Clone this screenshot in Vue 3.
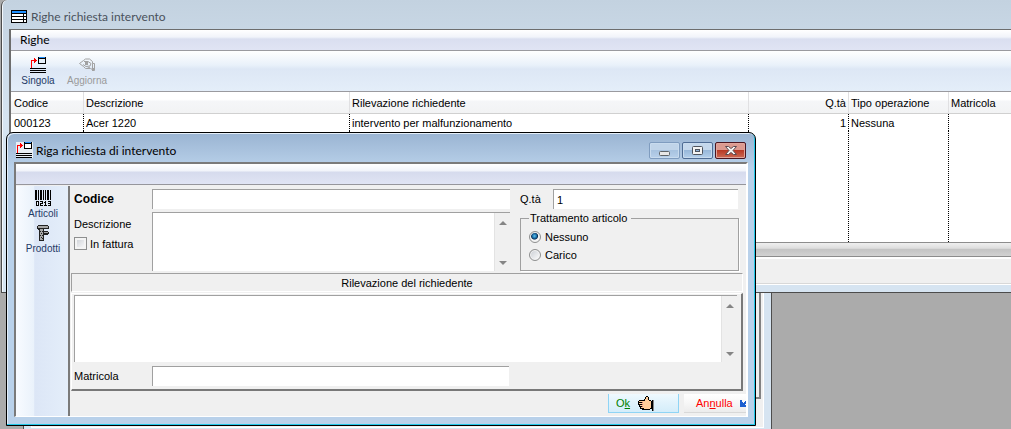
<script setup>
import { ref } from 'vue'

const rows = ref([
  {
    codice: '000123',
    descrizione: 'Acer 1220',
    rilevazione: 'intervento per malfunzionamento',
    quantita: 1,
    tipo: 'Nessuna',
    matricola: '',
  },
])

const form = ref({
  codice: '',
  descrizione: '',
  inFattura: false,
  quantita: '1',
  trattamento: 'nessuno',
  rilevazione: '',
  matricola: '',
})
</script>

<template>
  <main class="desktop">
    <div class="parent-window"><div class="parent-client"><div class="parent-panel"></div></div></div>

    <section class="window" aria-label="Righe richiesta intervento">
      <header class="window-title">
        <svg width="16" height="13" viewBox="0 0 16 13" shape-rendering="crispEdges" aria-hidden="true">
          <path fill="#000" d="M0 0h16v13H0z" />
          <path fill="#1e90ff" d="M1 1h14v2H1z" />
          <path fill="#fff" d="M1 4h11v2H1zM13 4h2v2h-2zM1 7h11v2H1zM13 7h2v2h-2zM1 10h11v2H1zM13 10h2v2h-2z" />
        </svg>
        <span>Righe richiesta intervento</span>
      </header>
      <div class="client">
        <nav class="menubar"><button type="button">Righe</button></nav>
        <div class="toolbar">
          <button type="button" class="tool">
            <svg width="17" height="16" viewBox="0 0 17 16" shape-rendering="crispEdges" aria-hidden="true">
              <path fill="#000" d="M8 0h8v7H8zM0 11h16v1H0zM0 13h16v1H0zM0 15h16v1H0z" />
              <path fill="#1e90ff" d="M9 0h6v1H9z" />
              <path fill="#e8f1fa" d="M9 2h6v4H9z" />
              <path fill="#f00" d="M1 3h4v1H1zM1 3h1v8H1zM4 1h1v5H4zM5 2h1v3H5zM6 3h1v1H6z" />
            </svg>
            <span>Singola</span>
          </button>
          <button type="button" class="tool" disabled>
            <svg width="17" height="14" viewBox="0 0 17 14" aria-hidden="true">
              <path fill="none" stroke="#a2a2a2" d="M.5 5.500l4-3 2-1.500h4l3 2.500v2M.5 5.500l4 3 2 2h5l2 1M5 3.500l4 0 3 2-1 2.500-4 .5-3-2M13.500 5.500h2v7h-2zM8 10.500l3-1.500" />
              <path fill="#a2a2a2" d="M6 4h3v3H6zM13 10h2v3h-2z" />
            </svg>
            <span>Aggiorna</span>
          </button>
        </div>
        <table class="grid">
          <colgroup>
            <col class="c-code" /><col class="c-desc" /><col class="c-note" />
            <col class="c-qty" /><col class="c-type" /><col />
          </colgroup>
          <thead>
            <tr>
              <th>Codice</th>
              <th>Descrizione</th>
              <th>Rilevazione richiedente</th>
              <th class="num">Q.tà</th>
              <th>Tipo operazione</th>
              <th>Matricola</th>
            </tr>
          </thead>
          <tbody>
            <tr v-for="row in rows" :key="row.codice">
              <td>{{ row.codice }}</td>
              <td>{{ row.descrizione }}</td>
              <td>{{ row.rilevazione }}</td>
              <td class="num">{{ row.quantita }}</td>
              <td>{{ row.tipo }}</td>
              <td>{{ row.matricola }}</td>
            </tr>
            <tr class="filler" aria-hidden="true"><td v-for="n in 6" :key="n"></td></tr>
          </tbody>
        </table>
        <div class="hscroll"></div>
        <div class="status"></div>
      </div>
    </section>

    <section class="dialog" role="dialog" aria-labelledby="dialog-title">
      <header class="dialog-title">
        <svg width="17" height="16" viewBox="0 0 17 16" shape-rendering="crispEdges" aria-hidden="true">
          <path fill="#e8eef5" d="M0 0h17v16H0z" />
          <path fill="#000" d="M8 0h8v7H8zM0 11h16v1H0zM0 13h16v1H0zM0 15h16v1H0z" />
          <path fill="#1e90ff" d="M9 0h6v1H9z" />
          <path fill="#fff" d="M9 2h6v4H9z" />
          <path fill="#f00" d="M1 3h4v1H1zM1 3h1v8H1zM4 1h1v5H4zM5 2h1v3H5zM6 3h1v1H6z" />
        </svg>
        <h1 id="dialog-title">Riga richiesta di intervento</h1>
        <div class="caption-buttons">
          <button type="button" class="caption" aria-label="Riduci a icona">
            <svg width="12" height="12" viewBox="0 0 12 12" aria-hidden="true">
              <rect x=".5" y="6.500" width="10" height="4" rx="1" fill="#e8e8e8" stroke="#5f6468" />
            </svg>
          </button>
          <button type="button" class="caption max" aria-label="Ingrandisci">
            <svg width="12" height="12" viewBox="0 0 12 12" aria-hidden="true">
              <rect x=".5" y="1.500" width="10" height="8" rx="1" fill="#f4f4f4" stroke="#4e545e" />
              <rect x="3.500" y="4.500" width="4" height="2" fill="#8fb2d8" stroke="#4e545e" />
            </svg>
          </button>
          <button type="button" class="caption close" aria-label="Chiudi">
            <svg width="12" height="12" viewBox="0 0 12 12" aria-hidden="true">
              <path fill="#f4f4f4" stroke="#5b4a50" d="M.5 1.500h3l2.500 2 2.500-2h3L8 5.500l3.500 4h-3L6 7.500l-2.500 2h-3L4 5.500z" />
            </svg>
          </button>
        </div>
      </header>

      <div class="dialog-client">
        <div class="dialog-menubar"></div>
        <div class="dialog-body">
          <aside class="sidebar">
            <button type="button" class="tool">
              <svg width="17" height="16" viewBox="0 0 17 16" shape-rendering="crispEdges" aria-hidden="true">
                <path fill="#000" d="M0 0h2v10H0zM3 0h1v10H3zM5 0h2v10H5zM8 0h1v10H8zM10 0h1v10h-1zM12 0h2v10h-2zM15 0h1v10h-1z" />
                <path fill="#000" d="M1 11h3v5H1zM5 11h3v1H5zM7 11h1v3H7zM5 13h3v1H5zM5 13h1v3H5zM5 15h3v1H5zM10 11h1v5h-1zM9 12h1v1H9zM9 15h3v1H9zM13 11h3v1h-3zM15 11h1v5h-1zM13 13h3v1h-3zM13 15h3v1h-3z" />
                <path fill="#f0f5fc" d="M2 12h1v3H2z" />
              </svg>
              <span>Articoli</span>
            </button>
            <button type="button" class="tool">
              <svg width="14" height="16" viewBox="0 0 14 16" shape-rendering="crispEdges" aria-hidden="true">
                <path fill="#222" d="M2 0h10v1h1v3H8v2h4v1h1v2h-1v1H8v6H3V5H2V4H1V1h1z" />
                <path fill="#a8a8a8" d="M2 1h10v2H2zM4 4h3v11H4zM8 7h4v1H8z" />
                <path fill="#222" d="M4 6h1v1H4zM6 6h1v1H6zM5 8h1v1H5zM4 10h1v1H4zM6 10h1v1H6zM5 12h1v1H5zM6 13h1v1H6z" />
              </svg>
              <span>Prodotti</span>
            </button>
          </aside>

          <form class="form" @submit.prevent>
            <div class="top">
              <div class="fields">
                <label class="strong" for="codice">Codice</label>
                <input id="codice" v-model="form.codice" class="field" type="text" />
                <div class="label-stack">
                  <label for="descrizione">Descrizione</label>
                  <label class="check"><input v-model="form.inFattura" type="checkbox" />In fattura</label>
                </div>
                <div class="area">
                  <textarea id="descrizione" v-model="form.descrizione"></textarea>
                  <div class="scrollbar">
                    <svg width="8" height="4" viewBox="0 0 8 4" aria-hidden="true"><path fill="#858585" d="M4 0l4 4H0z" /></svg>
                    <svg width="8" height="4" viewBox="0 0 8 4" aria-hidden="true"><path fill="#858585" d="M0 0h8L4 4z" /></svg>
                  </div>
                </div>
              </div>
              <div class="side">
                <div class="qty">
                  <label for="quantita">Q.tà</label>
                  <input id="quantita" v-model="form.quantita" class="field" type="text" />
                </div>
                <fieldset>
                  <legend>Trattamento articolo</legend>
                  <label><input v-model="form.trattamento" type="radio" name="trattamento" value="nessuno" />Nessuno</label>
                  <label><input v-model="form.trattamento" type="radio" name="trattamento" value="carico" />Carico</label>
                </fieldset>
              </div>
            </div>

            <label class="band" for="rilevazione">Rilevazione del richiedente</label>

            <div class="panel">
              <div class="area tall">
                <textarea id="rilevazione" v-model="form.rilevazione"></textarea>
                <div class="scrollbar">
                  <svg width="8" height="4" viewBox="0 0 8 4" aria-hidden="true"><path fill="#858585" d="M4 0l4 4H0z" /></svg>
                  <svg width="8" height="4" viewBox="0 0 8 4" aria-hidden="true"><path fill="#858585" d="M0 0h8L4 4z" /></svg>
                </div>
              </div>
              <div class="serial">
                <label for="matricola">Matricola</label>
                <input id="matricola" v-model="form.matricola" class="field" type="text" />
              </div>
            </div>

            <footer class="actions">
              <button type="submit" class="action ok">
                <span>O<u>k</u></span>
                <svg width="16" height="15" viewBox="0 0 16 15" shape-rendering="crispEdges" aria-hidden="true">
                  <path fill="#000" d="M8 0h2v1h1v3h2v1h1v8h-2v1H4v-1H2v-2H1V9H0V5h1V4h5V3h1V1h1z" />
                  <path fill="#ffcc99" d="M8 1h2v3h1v1h2v7h-1v1H6v-1H5V5h2V3h1zM1 5h4v1H1zM1 7h4v1H1zM2 9h3v1H2zM3 11h3v1H3z" />
                  <path fill="#c86a6a" d="M4 6h1v1H4zM4 8h1v1H4zM4 10h1v1H4z" />
                  <path fill="#000" d="M14 4h1v11h-1z" />
                  <path fill="#888" d="M15 4h1v11h-1z" />
                </svg>
              </button>
              <button type="button" class="action cancel">
                <span>An<u>n</u>ulla</span>
                <svg width="6" height="7" viewBox="0 0 6 7" shape-rendering="crispEdges" aria-hidden="true">
                  <path fill="#1c5fd0" d="M0 0h2v2h1v1h1V2h1V1h1v3H5v1h1v2H0z" />
                </svg>
              </button>
            </footer>
          </form>
        </div>
      </div>
    </section>
  </main>
</template>

<style>
body {
  margin: 0;
}
</style>

<style scoped>
.desktop {
  position: relative;
  min-height: 100vh;
  overflow: hidden;
  background: #ababab;
  color: #000;
  font-family: "Liberation Sans", Roboto, sans-serif;
  font-size: 11px;
  line-height: 14px;
}

*,
*::before,
*::after {
  box-sizing: border-box;
}

svg {
  display: block;
  flex: none;
}

button,
input,
textarea {
  margin: 0;
  padding: 0;
  border: 0;
  border-radius: 0;
  background: none;
  color: inherit;
  font: inherit;
}

/* window further back */
.parent-window {
  position: absolute;
  top: 200px;
  bottom: 0;
  left: 23px;
  right: 239px;
  padding: 0 7px;
  border: solid #4d4d4d;
  border-width: 0 1px;
  background: #d6e4f1;
}

.parent-client {
  height: calc(100% - 1px);
  padding: 0 2px 28px;
  border: 1px solid #fff;
  background: #f0f0f0;
}

.parent-panel {
  height: 100%;
  border: solid #828282;
  border-width: 0 2px 2px;
}

/* list window */
.window {
  position: absolute;
  top: 0;
  left: 1px;
  right: 0;
  padding: 0 0 7px 7px;
  border: solid #4c4c4c;
  border-width: 0 0 1px 1px;
  border-top-left-radius: 6px;
  background: linear-gradient(#c3d2e0, #d6e4f1 120px);
  box-shadow: inset 1px 0 #f4f8fc;
}

.window-title {
  display: flex;
  align-items: center;
  gap: 4px;
  height: 29px;
  padding: 4px 0 0 2px;
  color: #4a525c;
  font-family: Lato, "Open Sans", sans-serif;
  font-size: 12px;
}

.client {
  border: solid #6d6d6d;
  border-width: 1px 0 0 2px;
  border-bottom: 1px solid #fff;
}

.menubar {
  display: flex;
  height: 21px;
  padding-left: 9px;
  border-bottom: 1px solid #9a9a9f;
  background: linear-gradient(#fff, #f1f4fa 35%, #dadff0 45%, #e0e4f4);
  font-family: Lato, "Open Sans", sans-serif;
  font-size: 12px;
}

.toolbar {
  display: flex;
  height: 41px;
  padding-top: 6px;
  border-bottom: 1px solid #9a9a9f;
  background: linear-gradient(#fff, #e9f1fa 35%, #dde7f5 45%, #e4eef9);
}

.tool {
  display: flex;
  flex-direction: column;
  align-items: center;
  gap: 1px;
  color: #1f3a66;
  font-size: 10px;
}

.toolbar .tool {
  width: 49px;
  padding-left: 5px;
}

.toolbar .tool:disabled {
  gap: 2px;
  padding-top: 1px;
  color: #9a9a9a;
}

.grid {
  width: 100%;
  table-layout: fixed;
  border-collapse: separate;
  border-spacing: 0;
  background: #fff;
}

.c-code {
  width: 73px;
}

.c-desc {
  width: 266px;
}

.c-note {
  width: 399px;
}

.c-qty,
.c-type {
  width: 100px;
}

th,
td {
  padding: 0 2px;
  text-align: left;
  white-space: nowrap;
}

th:first-child,
td:first-child {
  padding-left: 3px;
}

th {
  height: 22px;
  padding-top: 1px;
  border-right: 1px solid #e0e0e2;
  border-bottom: 1px solid #d0d0d0;
  background: linear-gradient(#fff 35%, #f5f6f8 45%, #f2f3f4);
  font-weight: 400;
}

td {
  height: 17px;
  border-right: 1px dotted #000;
}

.filler td {
  height: 111px;
}

th:last-child,
td:last-child {
  border-right: 0;
}

.num {
  text-align: right;
}

.hscroll {
  height: 15px;
  border: solid #8c8c8c;
  border-width: 1px 0;
  background: linear-gradient(#efefef, #dedede 40%, #c4c4c4 50%, #d2d2d2);
}

.status {
  height: 27px;
  border-top: 2px solid #fff;
  border-bottom: 1px solid #d8d8d8;
  background: #f0f0f0;
}

/* dialog */
.dialog {
  position: absolute;
  top: 132px;
  left: 6px;
  right: 255px;
  padding: 0 7px;
  border: 1px solid #000;
  border-radius: 7px 7px 0 0;
  background: linear-gradient(#9ab4d2, #b9d1ea 35px, #b9d1ea);
  box-shadow: inset -1px -1px #22c8e8, inset 1px 1px #e4eef8;
}

.dialog-title {
  display: flex;
  gap: 3px;
  height: 29px;
  padding: 9px 2px 0 2px;
}

.dialog-title h1 {
  margin: 0;
  font-family: Lato, "Open Sans", sans-serif;
  font-size: 12px;
  font-weight: 400;
  line-height: 18px;
}

.caption-buttons {
  display: flex;
  gap: 2px;
  margin-left: auto;
}

.caption {
  display: flex;
  align-items: center;
  justify-content: center;
  width: 31px;
  height: 17px;
  border: 1px solid #7f9cbf;
  border-radius: 2px;
  background: linear-gradient(#c0d4e9 45%, #a8c3e0 50%, #b8d0ea);
  box-shadow: inset 0 0 0 1px #c8dbee;
}

.caption.max {
  border-color: #4f6c94;
  background: linear-gradient(#c5d8ec 45%, #98b8da 50%, #b4d0ec);
}

.caption.close {
  border-color: #4a1520;
  background: linear-gradient(#dc9a90 45%, #b83a26 50%, #cc6a54);
  box-shadow: inset 0 0 0 1px #e0a59c;
}

.dialog-client {
  margin-bottom: 8px;
  border: solid #7a7a7a;
  border-width: 2px 2px 1px;
  border-right-color: #fff;
  border-bottom-color: #fff;
  background: #f0f0f0;
}

.dialog-menubar {
  height: 21px;
  border-bottom: 1px solid #96969c;
  background: linear-gradient(#fff, #f1f4fa 35%, #d6dbed 40%, #e0e4f4);
}

.dialog-body {
  display: flex;
  padding-top: 1px;
}

.sidebar {
  display: flex;
  flex-direction: column;
  gap: 4px;
  width: 54px;
  padding: 4px 0 0 2px;
  border-right: 2px solid #7a7a7a;
  background: linear-gradient(90deg, #f8fbff, #eaf2fb 34%, #dce6f6 36%, #e4eefa);
}

.form {
  display: flex;
  flex: 1;
  flex-direction: column;
  min-width: 0;
  padding: 3px 0 3px 1px;
}

.top {
  display: flex;
  gap: 10px;
  padding-right: 7px;
}

.fields {
  display: grid;
  flex: 1;
  grid-template-columns: 78px 1fr;
  gap: 2px 3px;
}

.fields > label,
.label-stack {
  padding-left: 3px;
}

.strong {
  align-self: center;
  font-size: 12px;
  font-weight: 700;
}

.field,
.area {
  width: 100%;
  border: solid #a0a0a0;
  border-width: 1px 0 0 1px;
  background: #fff;
}

.field {
  height: 20px;
  padding: 0 3px;
}

.label-stack {
  display: flex;
  flex-direction: column;
  gap: 6px;
  padding-top: 5px;
}

.check {
  display: flex;
  align-items: center;
  gap: 3px;
}

.check input {
  width: 13px;
  height: 13px;
  appearance: none;
  border: 1px solid #8e8f8f;
  background: linear-gradient(135deg, #c8ccd2, #fff);
  box-shadow: inset 0 0 0 2px #f4f4f4;
}

.area {
  display: flex;
  height: 59px;
}

.area.tall {
  height: 67px;
}

textarea {
  flex: 1;
  min-width: 0;
  padding: 2px;
  resize: none;
  overflow: hidden;
}

.scrollbar {
  display: flex;
  flex-direction: column;
  align-items: center;
  justify-content: space-between;
  width: 16px;
  padding: 8px 0 6px;
  border-left: 1px solid #e3e3e3;
  background: #f0f0f0;
}

.side {
  display: flex;
  flex-direction: column;
  width: 219px;
}

.qty {
  display: flex;
  align-items: center;
  padding-right: 1px;
}

.qty label {
  flex: none;
  width: 33px;
}

fieldset {
  min-width: 0;
  margin: 0;
  margin-top: 2px;
  padding: 3px 8px 6px;
  border: 1px solid #a0a0a0;
  box-shadow: 1px 1px #fff;
}

legend {
  padding: 0 4px 0 1px;
}

fieldset label {
  display: flex;
  align-items: center;
  gap: 4px;
  height: 18px;
}

fieldset input {
  width: 12px;
  height: 12px;
  appearance: none;
  border: 1px solid #8e8f8f;
  border-radius: 50%;
  background: linear-gradient(135deg, #c8ccd2, #fff);
  box-shadow: inset 0 0 0 1px #f4f4f4;
}

fieldset input:checked {
  background: radial-gradient(circle at 45% 40%, #5cc4f0 0, #12609a 30%, #0a2c50 38%, #f4f4f4 50%);
}

.band {
  height: 19px;
  margin: 2px 3px 0 0;
  border: 1px solid #a0a0a0;
  border-right-color: #fff;
  border-bottom-color: #fff;
  line-height: 18px;
  text-align: center;
}

.panel {
  display: flex;
  flex-direction: column;
  gap: 4px;
  margin: 1px 3px 0 0;
  padding: 1px 4px 3px 2px;
  border: solid #787878;
  border-width: 1px 2px 2px 1px;
  border-top-color: #fff;
  border-left-color: #fff;
}

.serial {
  display: flex;
  align-items: center;
  padding-right: 228px;
}

.serial label {
  flex: none;
  width: 78px;
}

.actions {
  display: flex;
  justify-content: flex-end;
  gap: 5px;
  margin-top: 3px;
}

.action {
  display: flex;
  align-items: center;
  height: 19px;
  background: linear-gradient(#fff, #f8f8f8 45%, #ececec);
}

.action.ok {
  gap: 8px;
  width: 71px;
  padding-left: 7px;
  border: 1px solid #8fd4f5;
  border-top: 0;
  background: linear-gradient(#eff9fe, #e2f3fc 45%, #d4edfa);
  color: #008000;
}

.action.cancel {
  justify-content: space-between;
  width: 62px;
  padding-left: 12px;
  border-bottom: 1px solid #d8d8d8;
  color: #f00;
}
</style>
